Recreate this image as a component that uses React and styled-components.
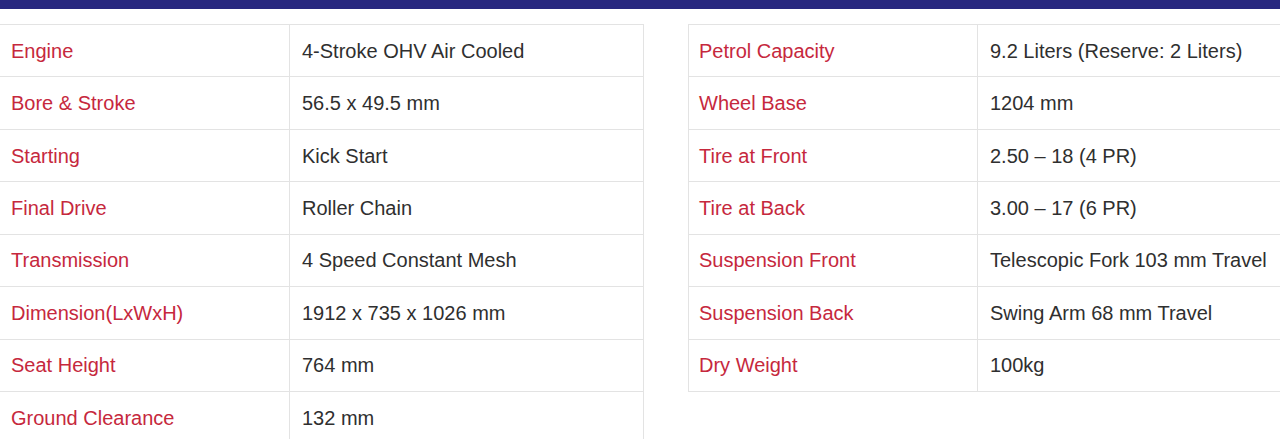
import React from 'react'
import styled, { createGlobalStyle } from 'styled-components'

const GlobalStyle = createGlobalStyle`
  html, body {
    margin: 0;
    padding: 0;
    background: #ffffff;
  }
  body {
    font-family: "Liberation Sans", Arial, sans-serif;
    overflow: hidden;
  }
`

const TopBand = styled.div`
  background-color: #28287f;
  height: 9px;
  width: 100%;
`

const Page = styled.div`
  display: grid;
  gap: 44px;
  grid-template-columns: 644px 644px;
  padding-top: 15px;
  width: 1280px;
  overflow: hidden;
  height: 415px;
`

const SpecTable = styled.table`
  border-collapse: collapse;
  table-layout: fixed;
  width: 644px;
  align-self: start;
`

const Row = styled.tr`
  height: 52.43px;
`

const Cell = styled.td`
  border: 1px solid #e3e3e3;
  box-sizing: border-box;
  font-size: 20px;
  line-height: 1;
  padding: 0 0 0 ${p => (p.$label ? '10px' : '12px')};
  color: ${p => (p.$label ? '#c6283d' : '#2f2f2f')};
  width: ${p => (p.$label ? '289px' : 'auto')};
  vertical-align: middle;
  white-space: nowrap;

  &:first-child {
    border-left-color: ${p => (p.$edge ? 'transparent' : '#e3e3e3')};
  }
`

const leftSpecs = [
  ['Engine', '4-Stroke OHV Air Cooled'],
  ['Bore & Stroke', '56.5 x 49.5 mm'],
  ['Starting', 'Kick Start'],
  ['Final Drive', 'Roller Chain'],
  ['Transmission', '4 Speed Constant Mesh'],
  ['Dimension(LxWxH)', '1912 x 735 x 1026 mm'],
  ['Seat Height', '764 mm'],
  ['Ground Clearance', '132 mm']
]

const rightSpecs = [
  ['Petrol Capacity', '9.2 Liters (Reserve: 2 Liters)'],
  ['Wheel Base', '1204 mm'],
  ['Tire at Front', '2.50 – 18 (4 PR)'],
  ['Tire at Back', '3.00 – 17 (6 PR)'],
  ['Suspension Front', 'Telescopic Fork 103 mm Travel'],
  ['Suspension Back', 'Swing Arm 68 mm Travel'],
  ['Dry Weight', '100kg']
]

function Specs({ rows, edge }) {
  return (
    <SpecTable>
      <tbody>
        {rows.map(([label, value]) => (
          <Row key={label}>
            <Cell $label $edge={edge}>{label}</Cell>
            <Cell>{value}</Cell>
          </Row>
        ))}
      </tbody>
    </SpecTable>
  )
}

export default function App() {
  return (
    <>
      <GlobalStyle />
      <TopBand />
      <Page>
        <Specs rows={leftSpecs} edge />
        <Specs rows={rightSpecs} />
      </Page>
    </>
  )
}
